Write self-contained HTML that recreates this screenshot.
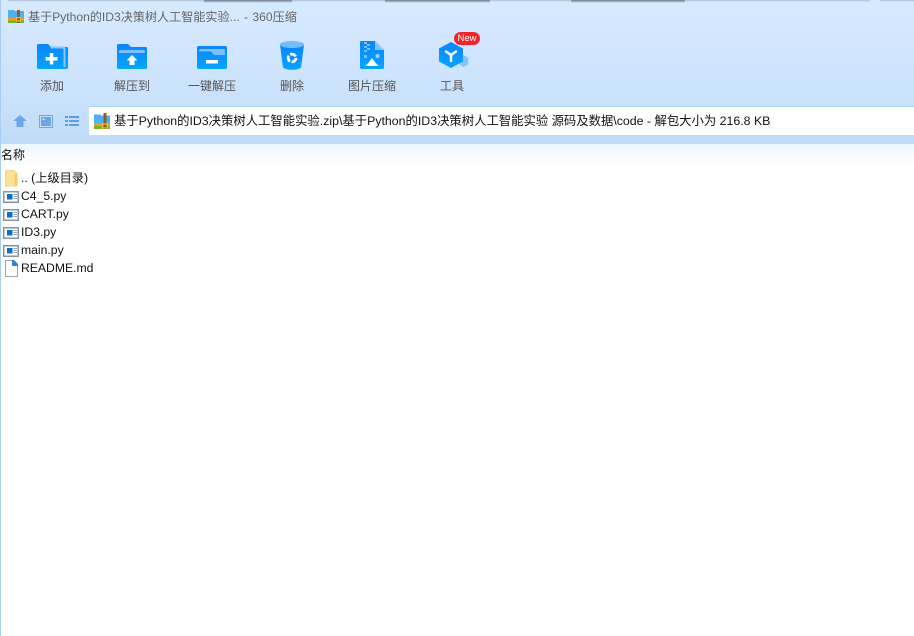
<!DOCTYPE html>
<html lang="zh">
<head>
<meta charset="utf-8">
<title>360压缩</title>
<style>
html,body{margin:0;padding:0;width:914px;height:636px;overflow:hidden;background:#fff}
body{position:relative;font-family:"Liberation Sans","Noto Sans CJK SC",sans-serif;}
.abs{position:absolute}
.t{position:absolute;white-space:pre;line-height:18px}
#top{left:0;top:0;width:914px;height:144px;background:linear-gradient(#d6eaff 0,#d2e7fe 40px,#c9e1fb 105px,#c0dbf6 144px)}
#hdr{left:0;top:144px;width:914px;height:22px;background:linear-gradient(#eff6fe,#fff)}
#lb{left:0;top:0;width:1px;height:636px;background:#a9cdf3}
#addr{left:89px;top:107px;width:825px;height:28px;background:#fff;box-shadow:0 -1px 0 #b5d3f2}
.sh{position:absolute;top:0;height:3px;background:linear-gradient(rgba(80,95,110,.65),rgba(80,95,110,.3) 60%,rgba(80,95,110,0))}
.base{position:absolute;top:0;height:2px;background:linear-gradient(rgba(110,125,140,.4),rgba(110,125,140,0))}
.lab{font-size:12px;color:#555;top:77px;width:80px;text-align:center}
.row{font-size:12.2px;color:#111;left:21px;line-height:17px}
svg{position:absolute;overflow:visible}
</style>
</head>
<body>
<div id="top" class="abs"></div>
<div id="hdr" class="abs"></div>
<div class="base" style="left:8px;width:862px"></div>
<div class="base" style="left:880px;width:34px"></div>
<div class="sh" style="left:204px;width:88px"></div>
<div class="sh" style="left:385px;width:105px"></div>
<div class="sh" style="left:571px;width:114px"></div>

<!-- title -->
<svg style="left:8px;top:9px" width="16" height="14" viewBox="0 0 16 14">
<path d="M0 1h6l1 1h9v8H0z" fill="#4db2f2"/><rect y="9" width="16" height="2.500" fill="#f59a1e"/><rect y="11.500" width="16" height="2.500" fill="#6fb52e"/>
<rect x="9" y="1" width="3" height="13" fill="#9a5a1e"/><rect x="8.500" y="8.500" width="4" height="3.500" fill="none" stroke="#f4c04a" stroke-width="1"/>
</svg>
<div class="t" style="left:28px;top:8px;font-size:12.1px;word-spacing:1px;color:#666">基于Python的ID3决策树人工智能实验... - 360压缩</div>

<!-- add -->
<svg style="left:37px;top:44px" width="31" height="25" viewBox="0 0 31 25">
<defs><linearGradient id="g" x1="0" y1="0" x2="0" y2="1"><stop offset="0" stop-color="#0a84ff"/><stop offset="1" stop-color="#05a5ff"/></linearGradient></defs>
<path d="M1.500 0H11l3 3h15.500A1.500 1.500 0 0 1 31 4.500v19a1.500 1.500 0 0 1-1.500 1.500h-28A1.500 1.500 0 0 1 0 23.500V1.500A1.500 1.500 0 0 1 1.500 0z" fill="url(#g)"/>
<path d="M13 2.500h13.500a2 2 0 0 1 2 2V23h-2V5a.5.500 0 0 0-.5-.5H14z" fill="#8ac8fc"/>
<path d="M12.800 9h3.500v4h4.200v3.500h-4.200v4h-3.500v-4H8.700V13h4.100z" fill="#fff"/>
</svg>
<div class="t lab" style="left:12px">添加</div>

<!-- extract -->
<svg style="left:117px;top:44px" width="30" height="25" viewBox="0 0 30 25">
<path d="M1.500 0H11l3 3h14.500A1.500 1.500 0 0 1 30 4.500v19a1.500 1.500 0 0 1-1.500 1.500h-27A1.500 1.500 0 0 1 0 23.500V1.500A1.500 1.500 0 0 1 1.500 0z" fill="url(#g)"/>
<path d="M2 9V7.500A1.500 1.500 0 0 1 3.500 6h23A1.500 1.500 0 0 1 28 7.500V9z" fill="#7cc1fb"/>
<path d="M15 11l5.500 5.500h-3V21h-5v-4.500h-3z" fill="#fff"/>
</svg>
<div class="t lab" style="left:92px">解压到</div>

<!-- one-click -->
<svg style="left:197px;top:46px" width="30" height="23" viewBox="0 0 30 23">
<rect width="30" height="23" rx="2" fill="url(#g)"/>
<path d="M2 4.500A1.500 1.500 0 0 1 3.500 3h23A1.500 1.500 0 0 1 28 4.500V9H17l-3-3.500H2z" fill="#7cc1fb"/>
<rect x="9" y="14" width="12" height="3.500" fill="#fff"/>
</svg>
<div class="t lab" style="left:172px">一键解压</div>

<!-- delete -->
<svg style="left:280px;top:41px" width="24" height="29" viewBox="0 0 24 29">
<path d="M0 3.500L2.800 25.500c.2 2 4 3.300 9.200 3.300s9-1.300 9.200-3.300L24 3.500z" fill="url(#g)"/>
<ellipse cx="12" cy="3.500" rx="12" ry="3.500" fill="#72bdfb"/>
<circle cx="12" cy="17" r="3.900" fill="none" stroke="#fff" stroke-width="2.800" stroke-dasharray="6.500 1.670"/>
</svg>
<div class="t lab" style="left:252px">删除</div>

<!-- image zip -->
<svg style="left:360px;top:41px" width="24" height="28" viewBox="0 0 24 28">
<path d="M1.500 0H15l9 9v17.500a1.500 1.500 0 0 1-1.500 1.500h-21A1.500 1.500 0 0 1 0 26.500v-25A1.500 1.500 0 0 1 1.500 0z" fill="url(#g)"/>
<path d="M15 0l9 9h-9z" fill="#82c4fb"/>
<path d="M4 1h3v2H4zM7 3h3v2H7zM4 5h3v2H4zM7 7h3v2H7zM4 9h3v2H4z" fill="#7cc1fb"/><rect x="4" y="14" width="3" height="3" fill="#7cc1fb"/>
<circle cx="17.500" cy="15" r="2" fill="#9fd4ff"/>
<path d="M5 25c2-1 4-4 7-8 3 4 5 7 7 8z" fill="#fff"/>
</svg>
<div class="t lab" style="left:332px">图片压缩</div>

<!-- tools -->
<svg style="left:439px;top:42px" width="30" height="26" viewBox="0 0 30 26">
<path d="M24.500 13l4.800 2.800v6.400L24.500 25 20 22.200v-6.400z" fill="#86c3fa"/>
<path d="M12 0l12 6.500v13L12 26 0 19.500v-13z" fill="url(#g)"/>
<path d="M7 9.500l5 3.500 5-3.500M12 13V19" fill="none" stroke="#fff" stroke-width="2.400" stroke-linecap="round"/>
</svg>
<div class="abs" style="left:454px;top:32px;width:26px;height:13px;border-radius:7px;background:#f5222d"></div>
<div class="t" style="left:454px;top:32px;width:26px;height:13px;line-height:13px;text-align:center;font-size:9.500px;color:#fff">New</div>
<div class="t lab" style="left:412px">工具</div>

<!-- nav -->
<svg style="left:13px;top:115px" width="14" height="12" viewBox="0 0 14 12"><path d="M7 0l7 6h-3.500v6h-7V6H0z" fill="#6ea6ea"/></svg>
<svg style="left:39px;top:115px" width="14" height="13" viewBox="0 0 14 13"><rect x=".5" y=".5" width="13" height="12" fill="#c7dff8" stroke="#6ea6ea"/><rect x="2" y="2" width="10" height="9" fill="#6ea6ea"/><rect x="3.500" y="3.500" width="2.500" height="1.500" fill="#c7dff8"/></svg>
<svg style="left:65px;top:116px" width="14" height="10" viewBox="0 0 14 10" fill="#5f9ce8"><rect width="3" height="2"/><rect x="4" width="10" height="2"/><rect y="4" width="3" height="2"/><rect x="4" y="4" width="10" height="2"/><rect y="8" width="3" height="2"/><rect x="4" y="8" width="10" height="2"/></svg>

<!-- address -->
<div id="addr" class="abs"></div>
<svg style="left:94px;top:113px" width="16" height="16" viewBox="0 0 16 16">
<path d="M0 1.500h6l1 1h9v8H0z" fill="#4db2f2"/><rect y="10" width="16" height="3" fill="#f59a1e"/><rect y="13" width="16" height="3" fill="#6fb52e"/>
<rect x="9.500" y="0" width="3" height="16" fill="#9a5a1e"/><rect x="8.500" y="11" width="5" height="4" fill="none" stroke="#f4c04a"/>
</svg>
<div class="t" style="left:114px;top:112px;font-size:12.35px;color:#111">基于Python的ID3决策树人工智能实验.zip\基于Python的ID3决策树人工智能实验 源码及数据\code - 解包大小为 216.8 KB</div>

<!-- list -->
<div class="t" style="left:1px;top:146px;font-size:12px;color:#111">名称</div>

<svg style="left:5px;top:170px" width="13" height="17" viewBox="0 0 13 17"><path d="M.5.500h8l3.500 3v12.500H.5z" fill="#fce293" stroke="#ecd491"/><path d="M9.500 3.500H12.500V16.500H9.500z" fill="#f3cd72"/></svg>
<div class="t row" style="top:170px">.. (上级目录)</div>

<svg style="left:3px;top:191px" width="16" height="12" viewBox="0 0 16 12"><rect x=".75" y=".75" width="14.500" height="10.500" fill="#fff" stroke="#8794a1" stroke-width="1.500"/><rect x="4" y="3" width="5.500" height="5.500" fill="#0b6fd0"/><path d="M10.500 3.500H14M10.500 5.500H14M10.500 7.500H14" stroke="#97a3af"/></svg>
<div class="t row" style="top:188px">C4_5.py</div>

<svg style="left:3px;top:209px" width="16" height="12" viewBox="0 0 16 12"><rect x=".75" y=".75" width="14.500" height="10.500" fill="#fff" stroke="#8794a1" stroke-width="1.500"/><rect x="4" y="3" width="5.500" height="5.500" fill="#0b6fd0"/><path d="M10.500 3.500H14M10.500 5.500H14M10.500 7.500H14" stroke="#97a3af"/></svg>
<div class="t row" style="top:206px">CART.py</div>

<svg style="left:3px;top:227px" width="16" height="12" viewBox="0 0 16 12"><rect x=".75" y=".75" width="14.500" height="10.500" fill="#fff" stroke="#8794a1" stroke-width="1.500"/><rect x="4" y="3" width="5.500" height="5.500" fill="#0b6fd0"/><path d="M10.500 3.500H14M10.500 5.500H14M10.500 7.500H14" stroke="#97a3af"/></svg>
<div class="t row" style="top:224px">ID3.py</div>

<svg style="left:3px;top:245px" width="16" height="12" viewBox="0 0 16 12"><rect x=".75" y=".75" width="14.500" height="10.500" fill="#fff" stroke="#8794a1" stroke-width="1.500"/><rect x="4" y="3" width="5.500" height="5.500" fill="#0b6fd0"/><path d="M10.500 3.500H14M10.500 5.500H14M10.500 7.500H14" stroke="#97a3af"/></svg>
<div class="t row" style="top:242px">main.py</div>

<svg style="left:5px;top:260px" width="13" height="17" viewBox="0 0 13 17"><path d="M.5.500h7.500l4.500 4.500v11.500H.5z" fill="#fff" stroke="#9aa3ad"/><path d="M7 0h2l4 4v2H8a1 1 0 0 1-1-1z" fill="#2b84d8"/></svg>
<div class="t row" style="top:260px">README.md</div>

<div id="lb" class="abs"></div>
</body>
</html>
